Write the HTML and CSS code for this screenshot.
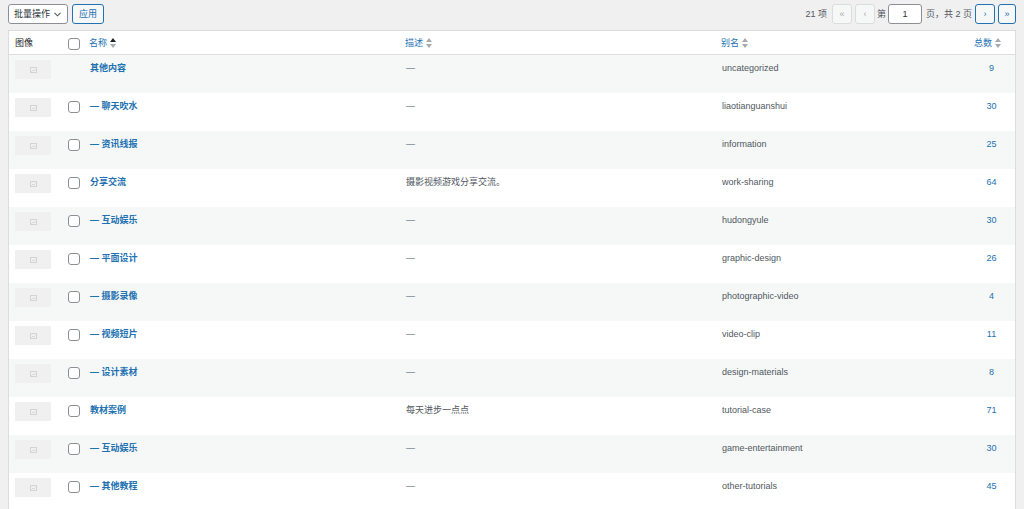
FILE: index.html
```html
<!DOCTYPE html>
<html lang="zh-CN">
<head>
<meta charset="utf-8">
<title>分类目录</title>
<link rel="stylesheet" href="styles.css">
</head>
<body>
<div class="tablenav">
  <div class="bulk">
    <div class="select"><span>批量操作</span><svg class="chev" width="7" height="5" viewBox="0 0 7 5"><polyline points="0.5,0.8 3.5,3.8 6.5,0.8" fill="none" stroke="#50575e" stroke-width="1.1"/></svg></div>
    <div class="btn">应用</div>
  </div>
  <div class="pages">
    <span class="count">21 项</span>
    <span class="pbtn disabled">«</span>
    <span class="pbtn disabled gap3">‹</span>
    <span class="ptext">第</span>
    <span class="pinput">1</span>
    <span class="ptext2">页，共 2 页</span>
    <span class="pbtn">›</span>
    <span class="pbtn gap3 last">»</span>
  </div>
</div>

<div class="list">
  <div class="row head">
    <div class="c-img">图像</div>
    <div class="c-cb"><span class="cb"></span></div>
    <div class="c-name"><span class="sort">名称<svg width="6" height="10" viewBox="0 0 6 10"><polygon points="0,4 3,0 6,4" fill="#1d2327"/><polygon points="0,6 3,10 6,6" fill="#a7aaad"/></svg></span></div>
    <div class="c-desc"><span class="sort">描述<svg width="6" height="10" viewBox="0 0 6 10"><polygon points="0,4 3,0 6,4" fill="#a7aaad"/><polygon points="0,6 3,10 6,6" fill="#a7aaad"/></svg></span></div>
    <div class="c-slug"><span class="sort">别名<svg width="6" height="10" viewBox="0 0 6 10"><polygon points="0,4 3,0 6,4" fill="#a7aaad"/><polygon points="0,6 3,10 6,6" fill="#a7aaad"/></svg></span></div>
    <div class="c-count"><span class="sort">总数<svg width="6" height="10" viewBox="0 0 6 10"><polygon points="0,4 3,0 6,4" fill="#a7aaad"/><polygon points="0,6 3,10 6,6" fill="#a7aaad"/></svg></span></div>
  </div>

  <div class="row alt">
    <div class="c-img"><span class="thumb"><svg width="7" height="6" viewBox="0 0 7 6"><rect x="0.5" y="0.5" width="6" height="5" fill="none" stroke="#d3d4d6"/><polyline points="1.5,4.5 3,3 4,4 5.5,2.5" fill="none" stroke="#d3d4d6" stroke-width="0.8"/></svg></span></div>
    <div class="c-cb"></div>
    <div class="c-name"><a>其他内容</a></div>
    <div class="c-desc">—</div>
    <div class="c-slug">uncategorized</div>
    <div class="c-count"><a>9</a></div>
  </div>

  <div class="row">
    <div class="c-img"><span class="thumb"><svg width="7" height="6" viewBox="0 0 7 6"><rect x="0.5" y="0.5" width="6" height="5" fill="none" stroke="#d3d4d6"/><polyline points="1.5,4.5 3,3 4,4 5.5,2.5" fill="none" stroke="#d3d4d6" stroke-width="0.8"/></svg></span></div>
    <div class="c-cb"><span class="cb"></span></div>
    <div class="c-name"><a>— 聊天吹水</a></div>
    <div class="c-desc">—</div>
    <div class="c-slug">liaotianguanshui</div>
    <div class="c-count"><a>30</a></div>
  </div>

  <div class="row alt">
    <div class="c-img"><span class="thumb"><svg width="7" height="6" viewBox="0 0 7 6"><rect x="0.5" y="0.5" width="6" height="5" fill="none" stroke="#d3d4d6"/><polyline points="1.5,4.5 3,3 4,4 5.5,2.5" fill="none" stroke="#d3d4d6" stroke-width="0.8"/></svg></span></div>
    <div class="c-cb"><span class="cb"></span></div>
    <div class="c-name"><a>— 资讯线报</a></div>
    <div class="c-desc">—</div>
    <div class="c-slug">information</div>
    <div class="c-count"><a>25</a></div>
  </div>

  <div class="row">
    <div class="c-img"><span class="thumb"><svg width="7" height="6" viewBox="0 0 7 6"><rect x="0.5" y="0.5" width="6" height="5" fill="none" stroke="#d3d4d6"/><polyline points="1.5,4.5 3,3 4,4 5.5,2.5" fill="none" stroke="#d3d4d6" stroke-width="0.8"/></svg></span></div>
    <div class="c-cb"><span class="cb"></span></div>
    <div class="c-name"><a>分享交流</a></div>
    <div class="c-desc">摄影视频游戏分享交流。</div>
    <div class="c-slug">work-sharing</div>
    <div class="c-count"><a>64</a></div>
  </div>

  <div class="row alt">
    <div class="c-img"><span class="thumb"><svg width="7" height="6" viewBox="0 0 7 6"><rect x="0.5" y="0.5" width="6" height="5" fill="none" stroke="#d3d4d6"/><polyline points="1.5,4.5 3,3 4,4 5.5,2.5" fill="none" stroke="#d3d4d6" stroke-width="0.8"/></svg></span></div>
    <div class="c-cb"><span class="cb"></span></div>
    <div class="c-name"><a>— 互动娱乐</a></div>
    <div class="c-desc">—</div>
    <div class="c-slug">hudongyule</div>
    <div class="c-count"><a>30</a></div>
  </div>

  <div class="row">
    <div class="c-img"><span class="thumb"><svg width="7" height="6" viewBox="0 0 7 6"><rect x="0.5" y="0.5" width="6" height="5" fill="none" stroke="#d3d4d6"/><polyline points="1.5,4.5 3,3 4,4 5.5,2.5" fill="none" stroke="#d3d4d6" stroke-width="0.8"/></svg></span></div>
    <div class="c-cb"><span class="cb"></span></div>
    <div class="c-name"><a>— 平面设计</a></div>
    <div class="c-desc">—</div>
    <div class="c-slug">graphic-design</div>
    <div class="c-count"><a>26</a></div>
  </div>

  <div class="row alt">
    <div class="c-img"><span class="thumb"><svg width="7" height="6" viewBox="0 0 7 6"><rect x="0.5" y="0.5" width="6" height="5" fill="none" stroke="#d3d4d6"/><polyline points="1.5,4.5 3,3 4,4 5.5,2.5" fill="none" stroke="#d3d4d6" stroke-width="0.8"/></svg></span></div>
    <div class="c-cb"><span class="cb"></span></div>
    <div class="c-name"><a>— 摄影录像</a></div>
    <div class="c-desc">—</div>
    <div class="c-slug">photographic-video</div>
    <div class="c-count"><a>4</a></div>
  </div>

  <div class="row">
    <div class="c-img"><span class="thumb"><svg width="7" height="6" viewBox="0 0 7 6"><rect x="0.5" y="0.5" width="6" height="5" fill="none" stroke="#d3d4d6"/><polyline points="1.5,4.5 3,3 4,4 5.5,2.5" fill="none" stroke="#d3d4d6" stroke-width="0.8"/></svg></span></div>
    <div class="c-cb"><span class="cb"></span></div>
    <div class="c-name"><a>— 视频短片</a></div>
    <div class="c-desc">—</div>
    <div class="c-slug">video-clip</div>
    <div class="c-count"><a>11</a></div>
  </div>

  <div class="row alt">
    <div class="c-img"><span class="thumb"><svg width="7" height="6" viewBox="0 0 7 6"><rect x="0.5" y="0.5" width="6" height="5" fill="none" stroke="#d3d4d6"/><polyline points="1.5,4.5 3,3 4,4 5.5,2.5" fill="none" stroke="#d3d4d6" stroke-width="0.8"/></svg></span></div>
    <div class="c-cb"><span class="cb"></span></div>
    <div class="c-name"><a>— 设计素材</a></div>
    <div class="c-desc">—</div>
    <div class="c-slug">design-materials</div>
    <div class="c-count"><a>8</a></div>
  </div>

  <div class="row">
    <div class="c-img"><span class="thumb"><svg width="7" height="6" viewBox="0 0 7 6"><rect x="0.5" y="0.5" width="6" height="5" fill="none" stroke="#d3d4d6"/><polyline points="1.5,4.5 3,3 4,4 5.5,2.5" fill="none" stroke="#d3d4d6" stroke-width="0.8"/></svg></span></div>
    <div class="c-cb"><span class="cb"></span></div>
    <div class="c-name"><a>教材案例</a></div>
    <div class="c-desc">每天进步一点点</div>
    <div class="c-slug">tutorial-case</div>
    <div class="c-count"><a>71</a></div>
  </div>

  <div class="row alt">
    <div class="c-img"><span class="thumb"><svg width="7" height="6" viewBox="0 0 7 6"><rect x="0.5" y="0.5" width="6" height="5" fill="none" stroke="#d3d4d6"/><polyline points="1.5,4.5 3,3 4,4 5.5,2.5" fill="none" stroke="#d3d4d6" stroke-width="0.8"/></svg></span></div>
    <div class="c-cb"><span class="cb"></span></div>
    <div class="c-name"><a>— 互动娱乐</a></div>
    <div class="c-desc">—</div>
    <div class="c-slug">game-entertainment</div>
    <div class="c-count"><a>30</a></div>
  </div>

  <div class="row">
    <div class="c-img"><span class="thumb"><svg width="7" height="6" viewBox="0 0 7 6"><rect x="0.5" y="0.5" width="6" height="5" fill="none" stroke="#d3d4d6"/><polyline points="1.5,4.5 3,3 4,4 5.5,2.5" fill="none" stroke="#d3d4d6" stroke-width="0.8"/></svg></span></div>
    <div class="c-cb"><span class="cb"></span></div>
    <div class="c-name"><a>— 其他教程</a></div>
    <div class="c-desc">—</div>
    <div class="c-slug">other-tutorials</div>
    <div class="c-count"><a>45</a></div>
  </div>
</div>
</body>
</html>
```

FILE: styles.css
```css
html, body {
  overflow: hidden;
}
body {
  margin: 0 8px;
  background: #f0f0f1;
  font-family: "Liberation Sans", "Noto Sans CJK SC", sans-serif;
  font-size: 9px;
  line-height: 14px;
  color: #50575e;
}

/* top navigation */
.tablenav {
  height: 30px;
  box-sizing: border-box;
  padding-top: 4px;
  display: flex;
  justify-content: space-between;
  align-items: flex-start;
}
.bulk {
  display: flex;
  gap: 4px;
}
.select {
  width: 60px;
  height: 20px;
  box-sizing: border-box;
  border: 1px solid #8c8f94;
  border-radius: 3px;
  background: #fff;
  color: #2c3338;
  display: flex;
  align-items: center;
  justify-content: space-between;
  padding: 0 6px 0 5px;
}
.btn {
  width: 32px;
  height: 20px;
  box-sizing: border-box;
  border: 1px solid #2271b1;
  border-radius: 3px;
  background: #f6f7f7;
  color: #2271b1;
  display: flex;
  align-items: center;
  justify-content: center;
}
.pages {
  display: flex;
  align-items: center;
  height: 20px;
}
.count {
  margin-right: 5px;
}
.pbtn {
  width: 20px;
  height: 20px;
  box-sizing: border-box;
  border: 1px solid #2271b1;
  border-radius: 3px;
  background: #f6f7f7;
  color: #2271b1;
  display: flex;
  align-items: center;
  justify-content: center;
  font-size: 9px;
}
.pbtn.last {
  width: 18px;
}
.pbtn.disabled {
  border-color: #dcdcde;
  color: #a7aaad;
}
.gap3 {
  margin-left: 3px;
}
.ptext {
  margin: 0 2px 0 2px;
  color: #50575e;
}
.pinput {
  width: 34px;
  height: 20px;
  box-sizing: border-box;
  border: 1px solid #8c8f94;
  border-radius: 3px;
  background: #fff;
  color: #2c3338;
  display: flex;
  align-items: center;
  justify-content: center;
}
.ptext2 {
  margin: 0 3px 0 4px;
}

/* list table */
.list {
  border: 1px solid #dcdcde;
  background: #fff;
  box-shadow: 0 1px 1px rgba(0, 0, 0, 0.04);
}
.row {
  display: grid;
  grid-template-columns: 51px 22px 316px 316px 254px 47px;
  height: 38px;
}
.row.alt {
  background: #f6f7f7;
}
.row > div {
  padding-top: 6px;
  white-space: nowrap;
  overflow: hidden;
}
.row.head {
  height: 23px;
  border-bottom: 1px solid #dcdcde;
  background: #fff;
  align-items: center;
}
.row.head > div {
  padding-top: 0;
}
.head .c-img {
  padding-left: 6px;
  color: #1d2327;
}
.head .c-name,
.head .c-desc,
.head .c-slug {
  padding-left: 7px;
}
.head .c-count {
  text-align: right;
  padding-right: 14px;
}
.head .c-cb {
  padding-top: 2px !important;
}
.sort {
  color: #2271b1;
  display: inline-flex;
  align-items: center;
  gap: 3px;
}
.c-img {
  padding-left: 6px;
}
.row > .c-img {
  padding-top: 5px;
}
.head > .c-img {
  padding-top: 0;
}
.thumb {
  width: 36px;
  height: 19px;
  background: #f0f0f1;
  display: flex;
  align-items: center;
  justify-content: center;
}
.c-cb {
  padding-left: 8px;
}
.row > .c-cb {
  padding-top: 8px;
}
.cb {
  display: block;
  width: 12px;
  height: 12px;
  box-sizing: border-box;
  border: 1px solid #8c8f94;
  border-radius: 3px;
  background: #fff;
}
.c-name,
.c-desc,
.c-slug {
  padding-left: 8px;
}
.c-name a {
  color: #2271b1;
  font-weight: bold;
}
.c-count {
  text-align: center;
}
.c-count a {
  color: #2271b1;
}
```
